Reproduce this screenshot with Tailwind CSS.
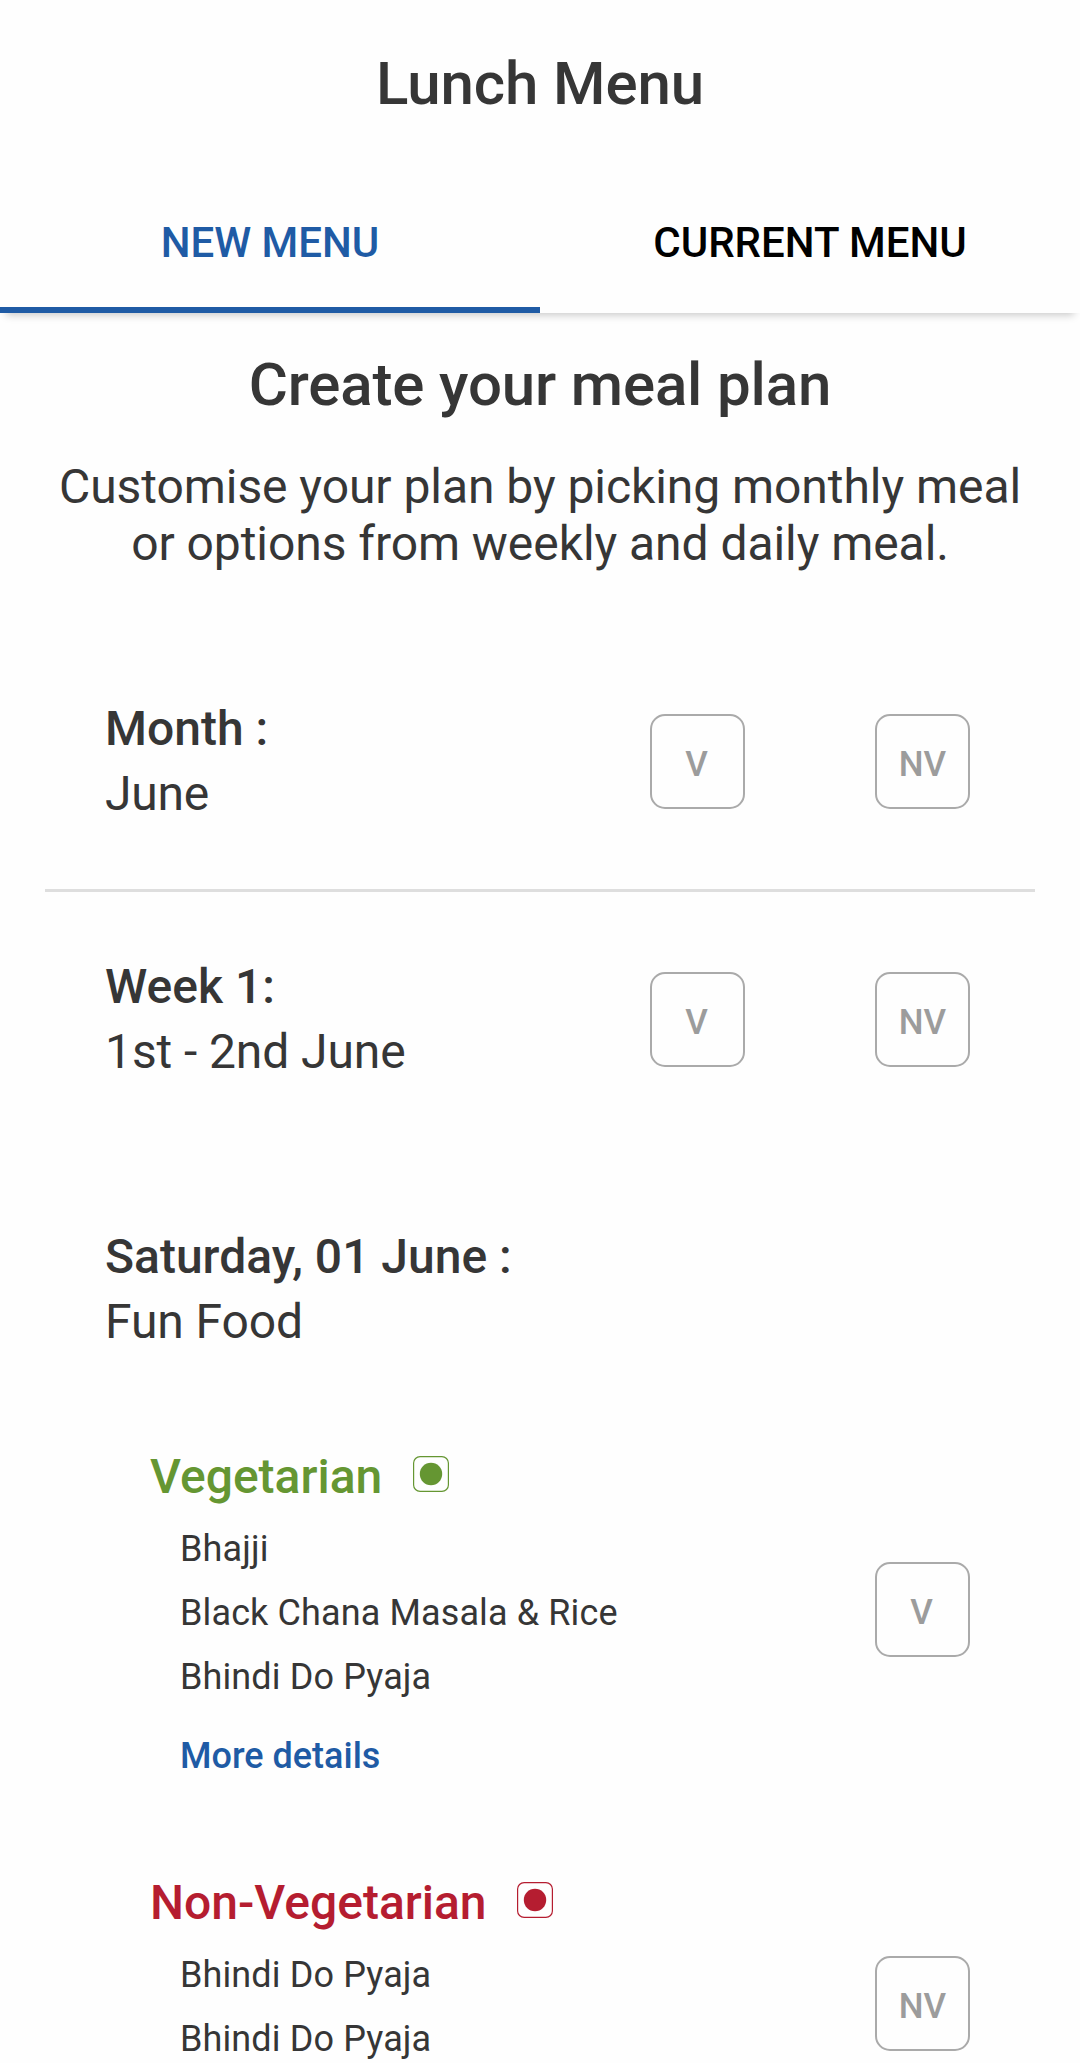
<!DOCTYPE html>
<html lang="en">
  <head>
    <meta charset="UTF-8" />
    <meta name="viewport" content="width=device-width, initial-scale=1.0" />
    <title>Lunch Menu</title>
    <script src="https://cdn.jsdelivr.net/npm/@tailwindcss/browser@4"></script>
  </head>
  <body class="bg-[#fefefe] font-[Roboto,sans-serif] text-[#363636] h-[2063px] overflow-hidden">
    <!-- Header -->
    <header class="h-[180px] pt-[49px]">
      <h1 class="text-[60px] leading-[70px] tracking-[-0.1px] font-medium text-center">Lunch Menu</h1>
    </header>

    <!-- Tabs -->
    <nav class="grid grid-cols-2 h-[133px] shadow-[0_8px_8px_-6px_rgba(0,0,0,0.22)] text-[42px] leading-[50px] font-medium text-center">
      <button class="pb-[1px] border-b-[6px] border-[#1f5ba5] text-[#1f5ba5]">NEW MENU</button>
      <button class="pb-[7px] text-black">CURRENT MENU</button>
    </nav>

    <main>
      <section class="pt-[37px] h-[343px] text-center">
        <h2 class="text-[60px] leading-[70px] tracking-[-0.15px] font-medium">Create your meal plan</h2>
        <p class="mt-[38px] text-[48px] leading-[57px] tracking-[-0.06px]">
          Customise your plan by picking monthly meal<br />or options from weekly and daily meal.
        </p>
      </section>

      <!-- Month -->
      <section class="mx-[45px] h-[236px] pt-[40px] pl-[60px] pr-[65px] flex border-b-[3px] border-[#dedede] text-[48px] leading-[65px]">
        <div class="flex-1">
          <p class="font-medium">Month :</p>
          <p class="tracking-[-0.2px]">June</p>
        </div>
        <button class="mt-[18px] size-[95px] pt-[6px] pr-[2px] rounded-[15px] border-2 border-[#aaaaaa] text-[35px] leading-none font-medium text-[#9c9c9c]">V</button>
        <button class="mt-[18px] ml-[130px] size-[95px] pt-[6px] rounded-[15px] border-2 border-[#aaaaaa] text-[35px] leading-none font-medium text-[#9c9c9c]">NV</button>
      </section>

      <!-- Week -->
      <section class="mx-[45px] h-[269px] pt-[62px] pl-[60px] pr-[65px] flex text-[48px] leading-[65px]">
        <div class="flex-1">
          <p class="font-medium">Week 1:</p>
          <p class="tracking-[-0.1px]">1st - 2nd June</p>
        </div>
        <button class="mt-[18px] size-[95px] pt-[6px] pr-[2px] rounded-[15px] border-2 border-[#aaaaaa] text-[35px] leading-none font-medium text-[#9c9c9c]">V</button>
        <button class="mt-[18px] ml-[130px] size-[95px] pt-[6px] rounded-[15px] border-2 border-[#aaaaaa] text-[35px] leading-none font-medium text-[#9c9c9c]">NV</button>
      </section>

      <!-- Day -->
      <section class="pl-[105px] pt-[63px] h-[281px] text-[48px] leading-[65px]">
        <p class="font-medium">Saturday, 01 June :</p>
        <p class="tracking-[-0.1px]">Fun Food</p>
      </section>

      <section class="pl-[150px] pr-[110px] h-[426px] flex justify-between">
        <div>
          <div class="flex items-center">
            <h3 class="text-[48px] leading-[70px] font-medium text-[#659632]">Vegetarian</h3>
            <svg class="ml-[31px] mb-[6px] size-[36px]" viewBox="0 0 36 36" fill="none">
              <rect x="0.6" y="0.6" width="34.8" height="34.8" rx="6.5" stroke="#659632" stroke-width="1.2" />
              <circle cx="18" cy="18" r="11.2" fill="#659632" />
            </svg>
          </div>
          <div class="pl-[30px] pt-[5px] text-[36px] leading-[64px] tracking-[0.12px]">
            <p>Bhajji</p>
            <p>Black Chana Masala &amp; Rice</p>
            <p>Bhindi Do Pyaja</p>
            <a href="#" class="block mt-[15px] tracking-normal font-medium text-[#1f5ba5]">More details</a>
          </div>
        </div>
        <button class="mt-[120px] size-[95px] pt-[6px] pr-[2px] rounded-[15px] border-2 border-[#aaaaaa] text-[35px] leading-none font-medium text-[#9c9c9c]">V</button>
      </section>

      <section class="pl-[150px] pr-[110px] flex justify-between">
        <div>
          <div class="flex items-center">
            <h3 class="text-[48px] leading-[70px] font-medium text-[#b51d30]">Non-Vegetarian</h3>
            <svg class="ml-[30px] mb-[6px] size-[36px]" viewBox="0 0 36 36" fill="none">
              <rect x="0.6" y="0.6" width="34.8" height="34.8" rx="6.5" stroke="#b51d30" stroke-width="1.2" />
              <circle cx="18" cy="18" r="11.2" fill="#b51d30" />
            </svg>
          </div>
          <div class="pl-[30px] pt-[5px] text-[36px] leading-[64px] tracking-[0.12px]">
            <p>Bhindi Do Pyaja</p>
            <p>Bhindi Do Pyaja</p>
          </div>
        </div>
        <button class="mt-[88px] size-[95px] pt-[6px] rounded-[15px] border-2 border-[#aaaaaa] text-[35px] leading-none font-medium text-[#9c9c9c]">NV</button>
      </section>
    </main>
  </body>
</html>
